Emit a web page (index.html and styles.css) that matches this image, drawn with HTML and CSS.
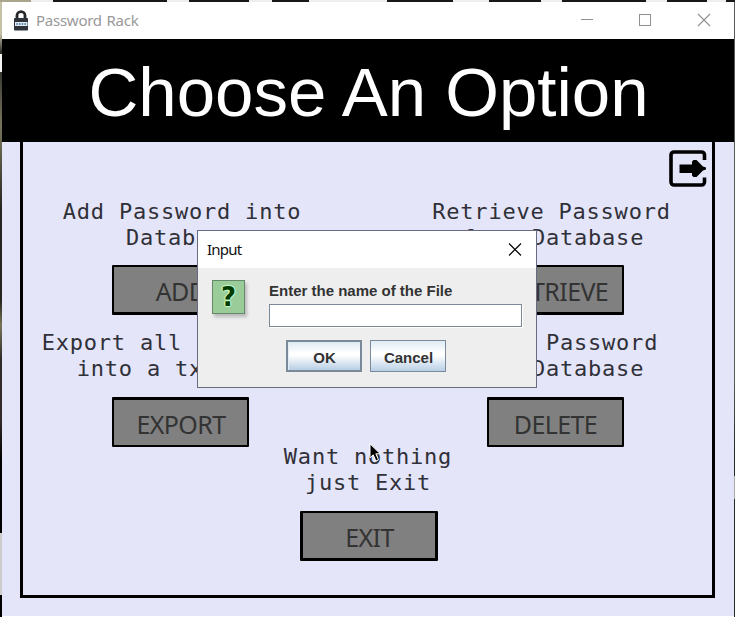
FILE: index.html
```html
<!DOCTYPE html>
<html lang="en">
<head>
<meta charset="utf-8">
<title>Password Rack</title>
<link rel="stylesheet" href="styles.css">
</head>
<body>
<div class="desktop">
  <div class="window">
    <div class="titlebar">
      <svg class="lock" width="16" height="21" viewBox="0 0 16 21">
        <path d="M4 8V5.500a4 3.800 0 0 1 8 0V8" fill="none" stroke="#24272b" stroke-width="2.800"/>
        <rect x="1" y="8" width="14" height="12.500" rx=".8" fill="#30343a"/>
        <rect x="2" y="12" width="12.500" height="4" fill="#dcecfb"/>
        <path d="M3.300 14h10" stroke="#4b6a8c" stroke-width="1.300" stroke-dasharray="1.600 1.100"/>
      </svg>
      <span class="caption">Password Rack</span>
      <svg class="controls" width="132" height="14" viewBox="0 0 132 14" fill="none" stroke="#909090">
        <path d="M0 6.500h12"/>
        <rect x="58.500" y="1.500" width="11" height="11"/>
        <path d="M117 1l12 12M129 1l-12 12" stroke-width="1.100"/>
      </svg>
    </div>
    <h1 class="heading">Choose An Option</h1>
    <div class="frame">
      <svg class="leave" width="38" height="38" viewBox="0 0 38 38">
        <path d="M35.500 11V6a3 3 0 0 0-3-3H5a3 3 0 0 0-3 3v27a3 3 0 0 0 3 3h27.500a3 3 0 0 0 3-3V28.500" fill="none" stroke="#000" stroke-width="3.600"/>
        <path d="M10.500 15.500h12.500v-3l1.500-1.500h3l6.500 6.500 3 1v2l-3 1-6.500 6.500h-3l-1.500-1.500v-2.500H10.500z"/>
      </svg>
      <div class="options">
        <section class="option">
          <p>Add Password into<br>Database</p>
          <button class="action">ADD</button>
        </section>
        <section class="option right">
          <p>Retrieve Password<br><span class="second">from Database</span></p>
          <button class="action">RETRIEVE</button>
        </section>
        <section class="option">
          <p>Export all Passwords<br>into a txt File</p>
          <button class="action low">EXPORT</button>
        </section>
        <section class="option right">
          <p><span class="second">Delete Password</span><br><span class="second">from Database</span></p>
          <button class="action low">DELETE</button>
        </section>
      </div>
      <section class="option last">
        <p>Want nothing<br>just Exit</p>
        <button class="action exit">EXIT</button>
      </section>
    </div>
  </div>
  <div class="dialog">
    <div class="dialog-title">
      <span>Input</span>
      <svg width="14" height="14" viewBox="0 0 14 14"><path d="M1 .5l12 12M13 .5L1 12.500" fill="none" stroke="#000" stroke-width="1.100"/></svg>
    </div>
    <div class="dialog-body">
      <div class="question">?</div>
      <div class="prompt">
        <label for="file">Enter the name of the File</label>
        <input id="file" type="text">
        <div class="buttons">
          <button class="metal default">OK</button>
          <button class="metal">Cancel</button>
        </div>
      </div>
    </div>
  </div>
  <svg class="cursor" width="14" height="20" viewBox="0 0 14 20"><path d="M1 .8v14l3.200-3 2.700 6.200 2.600-1.200-2.700-6h4.500z" fill="#000" stroke="#fff" stroke-width="1"/></svg>
</div>
</body>
</html>
```
FILE: styles.css
```css
* { box-sizing: border-box; }
body { margin: 0; overflow: hidden; }
button, input { margin: 0; padding: 0; border-radius: 0; }

/* strips of the desktop show above and beside the window */
.desktop {
  position: relative;
  width: 735px;
  height: 617px;
  padding: 2px 1px 0 2px;
  background:
    linear-gradient(90deg, #a8a58c 0 31px, #eee 31px 53px, #181818 53px 167px, #eee 167px 189px, #181818 189px 249px, #eee 249px 272px, #181818 272px 309px, #eee 309px 387px, #181818 387px 453px, #eee 453px 489px, #181818 489px 541px, #eee 541px 562px, #181818 562px 646px, #eee 646px 667px, #181818 667px 707px, #eee 707px 726px, #181818 726px) 0 0 / 735px 2px no-repeat,
    linear-gradient(180deg, #c4c1a7 0 34px, #302f2b 52px 54px, #f4f4f4 54px 72px, #3a3932 72px, #77745c 125px, #6c6953 142px, #24231f 210px, #25241f 300px, #77745a 325px, #302b29 360px, #332a2a 420px, #000 460px 533px, #ccc 533px 595px, #000 595px) 0 0 / 2px 617px no-repeat,
    linear-gradient(180deg, #555b55 0 380px, #252b2b 450px 476px, #aaa 476px 499px, #252b2b 499px) 734px 0 / 1px 617px no-repeat;
}
.window { height: 614px; background: #e4e5f9; box-shadow: 0 1px #fff; }

.titlebar {
  display: flex;
  align-items: center;
  height: 37px;
  padding-left: 11px;
  background: #fff;
}
.lock { margin-top: -1px; }
.caption {
  margin: -1px 0 0 7px;
  font: 15px/20px "Noto Sans", sans-serif;
  letter-spacing: -.6px;
  word-spacing: 1px;
  letter-spacing: -.25px;
  color: #999;
}
.controls { margin: -2px 21px 0 auto; }

.heading {
  height: 103px;
  margin: 0;
  padding: 2px 0 0 1px;
  background: #000;
  color: #fff;
  font: 69px/103px "Liberation Sans", Arial, sans-serif;
  text-align: center;
  white-space: nowrap;
}

.frame {
  position: relative;
  width: 695px;
  height: 456px;
  margin-left: 18px;
  padding-top: 57px;
  border: solid #000;
  border-width: 0 3px 3px;
}
.leave { position: absolute; top: 7px; right: 5px; }
.options {
  display: grid;
  grid-template-columns: 300px 300px;
  grid-template-rows: 131px 118px;
  column-gap: 70px;
  padding-left: 9px;
}
.option {
  display: flex;
  flex-direction: column;
  align-items: center;
}
.option p {
  margin: 0;
  font: 22px/26px "DejaVu Sans Mono", monospace;
  letter-spacing: .78px;
  text-align: center;
  color: #303038;
  white-space: nowrap;
}
.right p { margin-left: -1px; }
.second { margin-left: 3px; }
.action {
  width: 137px;
  height: 50px;
  margin: 14px 3px 0 0;
  padding: 2px 0 0 1px;
  border: solid #000;
  border-width: 2px 2px 3px;
  border-radius: 1px;
  background: #808080;
  color: #333;
  font: 25px/40px "Noto Sans", sans-serif;
  letter-spacing: -.6px;
}
.right .action { margin: 14px 0 0 6px; }
.option .action.low { margin-top: 15px; border-width: 3px 2px 2px; }
.last { width: 300px; margin: -4px 0 0 195px; }
.action.exit { width: 138px; margin: 15px 0 0 1px; padding-left: 2px; border-width: 2px 3px 3px; }

.dialog {
  position: absolute;
  left: 197px;
  top: 230px;
  width: 340px;
  height: 158px;
  border: 1px solid #666b80;
  background: #eee;
}
.dialog-title {
  display: flex;
  align-items: center;
  justify-content: space-between;
  height: 37px;
  padding: 0 14px 0 9px;
  background: #fff;
  color: #111;
  font: 15px/20px "Noto Sans", sans-serif;
  letter-spacing: -.8px;
}
.dialog-title span { margin-top: -2px; }
.dialog-body { display: flex; padding: 12px 14px 0; }
.question {
  width: 33px;
  height: 34px;
  border: 1px solid #66886a;
  background: #99cc99;
  box-shadow: 2px 3px 3px #bbb;
  color: #003c00;
  font: bold 26px/32px "DejaVu Sans", sans-serif;
  text-align: center;
  text-shadow: 1px 0 1px #cfc, -1px 0 1px #cfc, 0 1px 1px #cfc, 0 -1px 1px #cfc;
}
.prompt { margin-left: 24px; width: 253px; }
.prompt label, .metal {
  font: bold 15px/20px "Liberation Sans", Arial, sans-serif;
  color: #333;
}
.prompt label { display: block; height: 24px; padding-top: 1px; }
.prompt input {
  display: block;
  width: 253px;
  height: 23px;
  border: 1px solid #7a8a99;
  background: #fff;
  box-shadow: 1px 1px #fff;
}
.buttons { display: flex; gap: 8px; margin: 13px 0 0 17px; }
.metal {
  width: 76px;
  height: 32px;
  padding: 4px 0 0 1px;
  border: 1px solid #7a8a99;
  background: linear-gradient(#dfebf4, #fff 40%, #fff 47%, #b8cfe5);
}
.metal.default { padding-top: 3px; border-width: 2px; box-shadow: inset 1px 0 #e4edf5; }
.cursor { position: absolute; left: 369px; top: 443px; }
```
